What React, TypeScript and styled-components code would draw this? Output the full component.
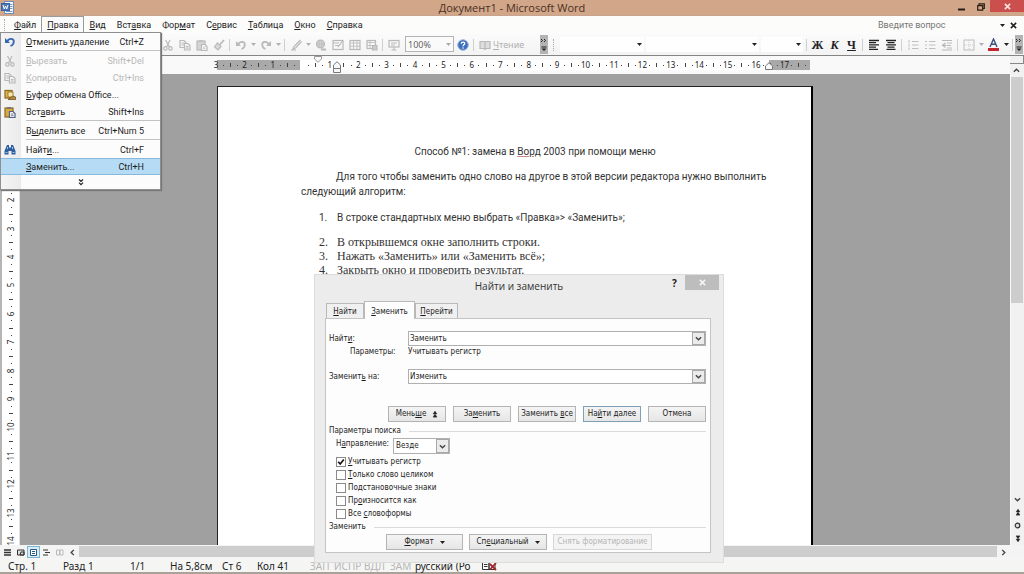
import React from "react";
import styled, { createGlobalStyle, css } from "styled-components";

const UI = '"Noto Sans", "Open Sans", sans-serif';
const MENU = 'Roboto, "Noto Sans", sans-serif';
const DIALOG = '"DejaVu Sans Condensed", "DejaVu Sans", sans-serif';

const GlobalStyle = createGlobalStyle`
  * { box-sizing: border-box; }
  body { margin: 0; font-family: ${UI}; font-size: 9px; color: #222; overflow: hidden; }
  button, input, select { font: inherit; color: inherit; margin: 0; }
  button { padding: 0; border: 0; background: none; }
  svg { display: block; flex: none; }
`;

/* ---------- window frame ---------- */

const Window = styled.div`
  position: relative;
  display: flex;
  flex-direction: column;
  height: 100vh;
  background: #f7f7f7;
`;

const TitleBar = styled.header`
  display: grid;
  grid-template-columns: 1fr auto 1fr;
  height: 16px;
  flex: none;
  background: #d1a689;
  border-bottom: 1px solid #c8a48f;
`;

const AppIcon = styled.div`
  padding: 1px 0 0 1px;
`;

const WindowTitle = styled.h1`
  margin: 0;
  font: 400 11px/15px "Open Sans", ${UI};
  color: #4a3022;
`;

const WindowControls = styled.div`
  display: flex;
  justify-content: flex-end;
`;

const WindowButton = styled.button<{ $close?: boolean }>`
  width: ${(p) => (p.$close ? 34 : 19)}px;
  height: ${(p) => (p.$close ? 12 : 13)}px;
  display: grid;
  place-items: center;
  background: ${(p) => (p.$close ? "#cb4f4c" : "none")};
`;

const MenuBar = styled.nav`
  display: flex;
  align-items: stretch;
  height: 18px;
  flex: none;
  padding-right: 4px;
  background: #fcfcfb;
  font-family: ${MENU};
`;

const Grip = styled.span<{ $width: number }>`
  width: ${(p) => p.$width}px;
  display: grid;
  place-items: center;
  &::after {
    content: "";
    height: 12px;
    border-left: 1px dotted #a8a8a8;
  }
`;

const MenuButton = styled.button<{ $open?: boolean }>`
  padding: 0 4px 0 5px;
  border: 1px solid transparent;
  line-height: 17px;
  white-space: nowrap;
  ${(p) =>
    p.$open &&
    css`
      background: #fafafa;
      border-color: #9a9a9a;
      border-bottom-color: transparent;
    `}
`;

const Ask = styled.input`
  width: 120px;
  margin-left: auto;
  padding: 0;
  border: 0;
  background: none;
  outline: 0;
  &::placeholder { color: #777; opacity: 1; }
`;

const SlimButton = styled.button<{ $width: number }>`
  width: ${(p) => p.$width}px;
  display: grid;
  place-items: center;
`;

/* ---------- toolbars ---------- */

const Toolbars = styled.div`
  display: flex;
  height: 22px;
  flex: none;
  padding: 1px 1px 1px 0;
  border-bottom: 1px solid #858585;
  background: linear-gradient(#fbfbfb, #f3f3f3);
`;

const Toolbar = styled.div<{ $grow?: boolean; $inset?: number }>`
  display: flex;
  align-items: stretch;
  flex: ${(p) => (p.$grow ? "1 1 auto" : "none")};
  padding-left: ${(p) => p.$inset ?? 0}px;
`;

const Tool = styled.button<{ $dim?: boolean }>`
  width: 17px;
  display: grid;
  place-items: center;
  color: ${(p) => (p.$dim ? "#b9b9b9" : "#222")};
`;

const Separator = styled.span`
  width: 5px;
  display: grid;
  place-items: center;
  &::after {
    content: "";
    height: 12px;
    border-left: 1px solid #cfcfcf;
  }
`;

const ReadButton = styled.button`
  width: 47px;
  padding-bottom: 1px;
  text-align: left;
  color: #b0b0b0;
`;

const ZoomBox = styled.label`
  position: relative;
  width: 49px;
  height: 16px;
  margin: 1px 0 0 3px;
  border: 1px solid #b4b4b4;
  background: #fafafa;
`;

const FieldBox = styled.label<{ $weight: number }>`
  position: relative;
  flex: ${(p) => p.$weight} 1 0;
  margin: 2px 1px;
  background: #fefefe;
`;

const BareSelect = styled.select`
  appearance: none;
  display: block;
  width: 100%;
  height: 100%;
  padding: 0 0 0 2px;
  border: 0;
  outline: 0;
  background: none;
  color: #666;
`;

const SelectArrow = styled.span`
  position: absolute;
  right: 2px;
  top: 0;
  bottom: 0;
  display: grid;
  place-items: center;
  pointer-events: none;
`;

const Overflow = styled.button`
  width: 8px;
  display: grid;
  place-items: center;
  background: #b3b3b3;
`;

const Letter = styled.span<{ $italic?: boolean; $underline?: boolean }>`
  font: 700 12px/16px "Liberation Serif", serif;
  font-style: ${(p) => (p.$italic ? "italic" : "normal")};
  text-decoration: ${(p) => (p.$underline ? "underline" : "none")};
`;

/* ---------- rulers ---------- */

const RulerRow = styled.div`
  display: flex;
  height: 18px;
  flex: none;
  background: #f9f9f9;
`;

const RulerArea = styled.div`
  display: flex;
  flex: 1 1 auto;
  justify-content: center;
  padding: 4px 3px 0 20px;
`;

const ScrollTop = styled.div`
  width: 14px;
  flex: none;
  background: #f1f1f1;
`;

const Splitter = styled.div`
  height: 8px;
  border-right: 1px solid #888;
  border-bottom: 1px solid #888;
`;

const RulerTrack = styled.div`
  position: relative;
  display: flex;
  width: 604px;
  height: 10px;
  padding-left: 1px;
  padding-right: 6px;
  background: linear-gradient(
    to right,
    transparent 5px, #a9a9a9 5px, #a9a9a9 88px, #fff 88px,
    #fff 557px, #a9a9a9 557px, #a9a9a9 598px, transparent 598px
  );
`;

const Centimetre = styled.span<{ $vertical?: boolean }>`
  flex: 1 1 0;
  min-width: 0;
  min-height: 0;
  display: flex;
  flex-direction: ${(p) => (p.$vertical ? "column" : "row")};
`;

const Mark = styled.span<{ $vertical?: boolean }>`
  flex: 1 1 0;
  min-width: 0;
  min-height: 0;
  display: flex;
  align-items: center;
  justify-content: center;
  white-space: nowrap;
  font: 8px/8px ${UI};
  color: #222;
  > b {
    font-weight: 400;
    transform: ${(p) => (p.$vertical ? "rotate(-90deg)" : "none")};
  }
  > i {
    width: 1px;
    height: 1px;
    background: #444;
  }
  > u {
    width: ${(p) => (p.$vertical ? 4 : 1)}px;
    height: ${(p) => (p.$vertical ? 1 : 4)}px;
    background: #444;
  }
`;

const IndentMark = styled.svg<{ $left: number; $top: number }>`
  position: absolute;
  left: ${(p) => p.$left}px;
  top: ${(p) => p.$top}px;
`;

const SideRuler = styled.div`
  width: 20px;
  flex: none;
  padding: 9px 1px 0 2px;
  overflow: hidden;
  background: #fff;
  border-left: 2px solid #b5b5b5;
  border-right: 1px solid #e2e2e2;
`;

const SideTrack = styled.div`
  display: flex;
  flex-direction: column;
  height: 483px;
  width: 14px;
`;

/* ---------- document ---------- */

const Workspace = styled.div`
  display: flex;
  flex: 1 1 0;
  min-height: 0;
`;

const Desk = styled.main`
  flex: 1 1 auto;
  display: flex;
  justify-content: center;
  padding-top: 12px;
  background: #a0a0a0;
`;

const Page = styled.article`
  width: 596px;
  padding: 57px 42px 0 83px;
  background: #fff;
  border: 1px solid #222;
  border-right: 2px solid #000;
  border-bottom: 0;
  font: 10px/15px Roboto, "Open Sans", sans-serif;
  color: #333;
`;

const DocTitle = styled.p`
  margin: 0 0 10px;
  text-align: center;
`;

const Misspelt = styled.span`
  text-decoration: underline;
  text-decoration-color: #c98a8a;
`;

const Lead = styled.p`
  margin: 0 0 11px;
  text-indent: 35px;
`;

const Steps = styled.ol`
  margin: 0;
  padding: 0 0 0 18px;
  list-style: none;
`;

const Step = styled.li<{ $serif?: boolean }>`
  display: grid;
  grid-template-columns: 18px 1fr;
  ${(p) =>
    p.$serif
      ? css`font: 12px/14px "Liberation Serif", serif;`
      : css`margin-bottom: 10px;`}
`;

/* ---------- scroll bars and status ---------- */

const VScroll = styled.div`
  width: 14px;
  flex: none;
  display: flex;
  flex-direction: column;
  align-items: center;
  background: #f1f1f1;
  border-left: 1px solid #fafafa;
`;

const VThumb = styled.div`
  align-self: flex-start;
  width: 12px;
  flex: 227 1 0;
  margin-top: 3px;
  background: #cdcdcd;
`;

const VSpace = styled.div`
  flex: 191 1 0;
`;

const ScrollButton = styled.button`
  width: 12px;
  height: 13px;
  display: grid;
  place-items: center;
`;

const HScroll = styled.div`
  display: flex;
  height: 13px;
  flex: none;
  align-items: stretch;
  padding: 1px 14px 0 1px;
  background: #f4f4f4;
`;

const ViewButton = styled.button<{ $on?: boolean }>`
  width: 13px;
  display: grid;
  place-items: center;
  border: 1px solid ${(p) => (p.$on ? "#7db6cf" : "transparent")};
  background: ${(p) => (p.$on ? "#d7ecf7" : "none")};
`;

const HThumb = styled.div`
  flex: 1 1 auto;
  margin-bottom: 1px;
  background: #cdcdcd;
`;

const StatusBar = styled.footer`
  display: flex;
  align-items: center;
  height: 16px;
  flex: none;
  padding: 2px 0 0 8px;
  border-bottom: 2px solid #aaa298;
  background: #f5f6f4;
  font-size: 10px;
  line-height: 12px;
`;

const StatusCell = styled.span<{ $width: number; $off?: boolean }>`
  width: ${(p) => p.$width}px;
  white-space: nowrap;
  color: ${(p) => (p.$off ? "#b5b5b5" : "#222")};
`;

/* ---------- edit menu ---------- */

const Dropdown = styled.div`
  position: absolute;
  left: 0;
  top: 32px;
  width: 161px;
  border: 1px solid #8f8f8f;
  background: linear-gradient(to right, #f4f4f4, #ebebeb 20px, #fcfcfc 20px);
  box-shadow: 1px 1px 1px #777;
  font-family: ${MENU};
`;

const DropItem = styled.button<{ $active?: boolean; $off?: boolean }>`
  display: grid;
  grid-template-columns: 20px 1fr auto;
  align-items: center;
  width: 100%;
  height: 17px;
  padding: 1px 16px 0 0;
  line-height: 14px;
  text-align: left;
  white-space: nowrap;
  color: ${(p) => (p.$off ? "#b8b8b8" : "#1c1c1c")};
  border: 1px solid transparent;
  border-width: 1px 0;
  ${(p) =>
    p.$active &&
    css`
      background: #b6dcf5;
      border-color: #86b9dc;
    `}
`;

const DropIcon = styled.span`
  padding-left: 3px;
`;

const DropLabel = styled.span`
  padding-left: 5px;
`;

const DropRule = styled.div`
  height: 2px;
  margin-left: 25px;
  border-top: 1px solid #c2c2c2;
`;

const DropMore = styled.button`
  display: grid;
  place-items: center;
  width: 100%;
  height: 14px;
`;

/* ---------- find and replace dialog ---------- */

const Dialog = styled.section`
  position: absolute;
  left: calc(50% - 198px);
  top: 274px;
  width: 410px;
  padding: 0 12px 9px 10px;
  border: 1px solid #dcdcdc;
  background: #ececec;
  font: 8px/12px ${DIALOG};
  color: #1c1c1c;
`;

const DialogHead = styled.div`
  display: grid;
  grid-template-columns: 1fr auto 1fr;
  height: 26px;
  margin-right: -8px;
`;

const DialogTitle = styled.h2`
  margin: 0;
  padding: 4px 6px 0 0;
  font: 400 10px/15px "Open Sans", ${UI};
  color: #333;
`;

const DialogControls = styled.div`
  display: flex;
  justify-content: flex-end;
  align-items: flex-start;
`;

const HelpButton = styled.button`
  width: 21px;
  height: 16px;
  font: 700 10px/16px ${UI};
`;

const CloseButton = styled.button`
  width: 34px;
  height: 15px;
  display: grid;
  place-items: center;
  background: #bdbdbd;
`;

const Tabs = styled.div`
  display: flex;
  align-items: flex-end;
  height: 17px;
  padding-left: 1px;
`;

const Tab = styled.button<{ $width: number; $on?: boolean }>`
  width: ${(p) => p.$width}px;
  height: ${(p) => (p.$on ? 18 : 15)}px;
  margin-bottom: ${(p) => (p.$on ? -1 : 0)}px;
  padding-top: 2px;
  position: relative;
  border: 1px solid #b9b9b9;
  border-bottom: 0;
  background: ${(p) => (p.$on ? "#fdfdfd" : "#f0f0f0")};
`;

const Panel = styled.div`
  padding: 12px 4px 2px 3px;
  border: 1px solid #c4c4c4;
  background: #fdfdfd;
`;

const FieldRow = styled.div`
  display: grid;
  grid-template-columns: 79px 1fr;
  align-items: center;
`;

const ParamsRow = styled(FieldRow)`
  height: 12px;
  margin-bottom: 11px;
  > span:first-child { padding-left: 21px; }
`;

const Combo = styled.div`
  position: relative;
  display: flex;
  height: 15px;
  border: 1px solid #b0b0b0;
  background: #fff;
`;

const ComboInput = styled.input`
  flex: 1;
  min-width: 0;
  padding: 0 0 0 1px;
  border: 0;
  outline: 0;
  background: none;
`;

const ComboArrow = styled.button`
  width: 13px;
  display: grid;
  place-items: center;
  border: 1px solid #a8a8a8;
  background: #ebebeb;
`;

const ButtonRow = styled.div<{ $end?: boolean; $gap: number }>`
  display: flex;
  justify-content: ${(p) => (p.$end ? "flex-end" : "flex-start")};
  gap: ${(p) => p.$gap}px;
  margin: ${(p) => (p.$end ? "22px 0 3px" : "1px 0 0 57px")};
`;

const PushButton = styled.button<{ $width: number; $primary?: boolean }>`
  display: flex;
  align-items: center;
  justify-content: center;
  gap: 6px;
  width: ${(p) => p.$width}px;
  height: 16px;
  border: 1px solid ${(p) => (p.$primary ? "#7f9fb5" : "#b4b4b4")};
  background: linear-gradient(#f4f4f4, #e6e6e6);
  white-space: nowrap;
  &:disabled {
    color: #b4b4b4;
    border-color: #d6d6d6;
    background: #f4f4f4;
  }
`;

const SectionTitle = styled.h3`
  display: flex;
  align-items: center;
  gap: 8px;
  height: 12px;
  margin: 0;
  font: inherit;
  &::after {
    content: "";
    flex: 1;
    border-top: 1px solid #dadada;
  }
`;

const DirectionRow = styled.div`
  display: flex;
  height: 16px;
  margin: 1px 0 1px 7px;
  gap: 4px;
`;

const DirectionLabel = styled.label`
  width: 53px;
`;

const DirectionBox = styled(Combo)`
  width: 57px;
  height: 16px;
`;

const DirectionSelect = styled(BareSelect)`
  color: #1c1c1c;
`;

const SelectCap = styled.span`
  position: absolute;
  right: 0;
  top: 0;
  bottom: 0;
  width: 13px;
  display: grid;
  place-items: center;
  border: 1px solid #a8a8a8;
  background: #ebebeb;
  pointer-events: none;
`;

const CheckRow = styled.label`
  display: flex;
  align-items: center;
  gap: 2px;
  height: 13px;
  margin-left: 7px;
`;

const CheckList = styled.div`
  margin-bottom: 1px;
`;

const CheckBox = styled.span`
  position: relative;
  width: 10px;
  height: 10px;
  > svg {
    position: absolute;
    left: 0;
    top: 0;
    display: none;
    pointer-events: none;
  }
  > input:checked + svg { display: block; }
`;

const CheckInput = styled.input`
  appearance: none;
  display: block;
  width: 10px;
  height: 10px;
  border: 1px solid #8a8a8a;
  background: #fff;
`;

/* ---------- small drawings ---------- */

const Caret = ({ color = "#222" }: { color?: string }) => (
  <svg width="5" height="3" viewBox="0 0 5 3"><path d="M0 0h5L2.5 3z" fill={color} /></svg>
);

const Chevron = ({ turn = 0, size = 7 }: { turn?: number; size?: number }) => (
  <svg width={size} height={size} viewBox="0 0 8 8">
    <path d="M1 2.5 4 5.5 7 2.5" fill="none" stroke="#444" strokeWidth="1.6" transform={`rotate(${turn} 4 4)`} />
  </svg>
);

const Cross = ({ color, size = 7 }: { color: string; size?: number }) => (
  <svg width={size} height={size} viewBox="0 0 8 8">
    <path d="M1 1 7 7M7 1 1 7" stroke={color} strokeWidth="1.8" />
  </svg>
);

const Glyph = ({ children, size = 12 }: { children: React.ReactNode; size?: number }) => (
  <svg width={size} height={size} viewBox="0 0 12 12" fill="none" stroke="currentColor" strokeWidth="1.2">{children}</svg>
);

const Scissors = () => (
  <Glyph><path d="M3.5 1 7.5 8M8 1 4.5 8" /><circle cx="3.4" cy="9.4" r="1.7" /><circle cx="8.4" cy="9.4" r="1.7" /></Glyph>
);
const Copy = () => (
  <Glyph><path d="M1 1.5h4l2 2v5H1zM2.5 4h3M2.5 6h3" /><path d="M5.5 4.5h3.5l2 2v4.5H5.5z" fill="#f4f4f4" /><path d="M7 7.5h2.5M7 9.2h2.5" /></Glyph>
);
const Paste = ({ tint }: { tint?: boolean }) => (
  <Glyph>
    <rect x="1" y="2" width="8" height="9" fill={tint ? "#d9aa3c" : "#d4d4d4"} stroke={tint ? "#8c6a24" : "currentColor"} />
    <rect x="3" y="1" width="4" height="2" fill={tint ? "#777" : "#c0c0c0"} stroke="none" />
    <path d="M5.5 5.5h3.5l2 2v4H5.5z" fill="#fafafa" stroke={tint ? "#4d5f86" : "currentColor"} />
    <path d="M7 8h2.5M7 9.7h2.5" strokeWidth=".8" stroke={tint ? "#4d5f86" : "currentColor"} />
  </Glyph>
);
const Clipboard = () => (
  <Glyph>
    <rect x="1" y="1.5" width="7" height="7.5" fill="#e2b545" stroke="#8c6a24" />
    <rect x="4" y="3" width="5" height="5" fill="#f7e6ac" stroke="#8c6a24" strokeWidth=".8" />
    <path d="M4 10.5h7.5V8L9 7z" fill="#b98a35" stroke="#6d5220" strokeWidth=".8" />
  </Glyph>
);
const Brush = () => (
  <Glyph><path d="M11 1 7 5.5" strokeWidth="1.8" /><path d="M4.5 4 8 7.5 5 11 1.5 8z" fill="#d9d9d9" /></Glyph>
);
const Undo = ({ color }: { color?: string }) => (
  <svg width="12" height="12" viewBox="0 0 12 12" fill="none" stroke={color ?? "currentColor"} strokeWidth="1.8">
    <path d="M3 5.5C5 1.8 9.8 2 9.8 5.5 9.8 8 8 9.5 6.5 10" /><path d="M1 2v5h5z" fill={color ?? "currentColor"} stroke="none" />
  </svg>
);
const Redo = () => (
  <Glyph><path d="M9 5.5C7 1.8 2.2 2 2.2 5.5 2.2 8 4 9.5 5.5 10" strokeWidth="1.8" /><path d="M11 2v5H6z" fill="currentColor" stroke="none" /></Glyph>
);
const Pen = () => (
  <Glyph><path d="M10.5 1 4 7.5 3 10l2.5-1 6-6.5M1 11h5" /></Glyph>
);
const GlobeLink = () => (
  <Glyph><circle cx="5.5" cy="5" r="4" fill="#d2d2d2" /><path d="M1.5 5h8M5.5 1c-2 2.5-2 5.5 0 8M5.5 1c2 2.5 2 5.5 0 8" strokeWidth=".7" /><path d="M6 10.5h5" strokeWidth="2" /></Glyph>
);
const Borders = () => (
  <Glyph><rect x="1" y="1.5" width="10" height="9" /><path d="M1 4h6M3 6.5h4M10.5 2 6 8" /></Glyph>
);
const Grid = () => (
  <Glyph><rect x="1" y="1.5" width="10" height="9" /><path d="M1 4h10M1 7.2h10M4.5 2v8.5M8 2v8.5" strokeWidth=".8" /></Glyph>
);
const Sheet = () => (
  <Glyph><rect x="1" y="1.5" width="8.5" height="8" /><path d="M1 3.5h8.5M1 6.5h8M4 2v7" strokeWidth=".8" /><path d="M6.5 6.5h4.5v4.5H6.5z" fill="#ccc" /></Glyph>
);
const Monitor = () => (
  <Glyph><rect x="1" y="1.5" width="10" height="6.5" /><path d="M3 4h6M3 6h4M6 8v3M3.5 11h5" /></Glyph>
);
const Help = () => (
  <svg width="12" height="12" viewBox="0 0 12 12">
    <circle cx="6" cy="6" r="5.3" fill="#3f70bd" stroke="#9db7dd" />
    <path d="M4.2 4.7C4.3 2.5 7.9 2.7 7.7 4.7 7.6 5.8 6 5.9 6 7.3" fill="none" stroke="#fff" strokeWidth="1.3" />
    <circle cx="6" cy="9" r=".8" fill="#fff" />
  </svg>
);
const Book = () => (
  <Glyph><path d="M1 2.5h4l1 1 1-1h4v7H7l-1 1-1-1H1zM6 3.5v7" fill="#dedede" /></Glyph>
);
const Binoculars = () => (
  <svg width="12" height="12" viewBox="0 0 12 12">
    <path d="M3 1h2v2l1 1 1-1V1h2l2.5 6v3.5h-4V7h-3v3.5h-4V7z" fill="#2f5f9f" />
    <path d="M1.5 8.5h2M8.5 8.5h2M3.5 3v2M8.5 3v2" stroke="#9cc0e6" />
  </svg>
);
const AlignLeft = () => (
  <Glyph><path d="M1 1.5h10M1 3.7h7M1 5.9h10M1 8.1h7M1 10.3h9" strokeWidth="1.3" /></Glyph>
);
const AlignCenter = () => (
  <Glyph><path d="M1 1.5h10M2.5 3.7h7M1 5.9h10M2.5 8.1h7M1.5 10.3h9" strokeWidth="1.3" /></Glyph>
);
const NumberList = () => (
  <Glyph><path d="M5 2.5h6.5M5 6h6.5M5 9.5h6.5M2 1v3M2 5v2.5M2 8.5V11" strokeWidth=".9" /></Glyph>
);
const BulletList = () => (
  <Glyph><path d="M5 2.5h6.5M5 6h6.5M5 9.5h6.5M1 2.5h2M1 6h2M1 9.5h2" strokeWidth=".9" /></Glyph>
);
const Indent = () => (
  <Glyph><path d="M1 1.5h10M6 4h5M6 6.5h4M1 11h10M6 9h5M4.5 4 1.5 6.3 4.5 8.5M1.5 6.3h4" /></Glyph>
);
const Frame = () => (
  <Glyph><rect x="1" y="1" width="10" height="10" strokeWidth=".9" /><path d="M6 1v10M1 6h10" strokeDasharray="1 1" strokeWidth=".7" /></Glyph>
);
const FontColor = () => (
  <svg width="13" height="13" viewBox="0 0 13 13">
    <path d="M3 9 6.5 1 10 9M4.3 6.3h4.4" fill="none" stroke="#3c4f7d" strokeWidth="1.4" />
    <rect x="1" y="10" width="11" height="3" fill="#c4242b" />
  </svg>
);
const WordLogo = () => (
  <svg width="13" height="13" viewBox="0 0 13 13">
    <rect x="3.5" y=".5" width="9" height="12" fill="#f4f8fd" stroke="#6f8fbb" />
    <path d="M8 3.5h3.5M8 5.5h3.5M8 7.5h3.5M5 10.5h6.5" stroke="#7e9ac1" />
    <rect x=".5" y="2.5" width="8" height="7" fill="#4d79b8" stroke="#3a62a0" />
    <path d="M2 4 3.3 8 4.5 5 5.7 8 7 4" fill="none" stroke="#fff" strokeWidth="1" />
  </svg>
);
const OverflowMarks = () => (
  <svg width="6" height="14" viewBox="0 0 6 14"><path d="M0 1l1.5 1.5L0 4M3 1l1.5 1.5L3 4" fill="none" stroke="#222" /><path d="M.5 9h5" stroke="#222" /><path d="M.5 10.5h5L3 13z" fill="#222" /></svg>
);
const DoubleChevron = () => (
  <svg width="6" height="7" viewBox="0 0 6 7"><path d="M1 .5l2 2 2-2M1 3.7l2 2 2-2" fill="none" stroke="#222" strokeWidth="1.2" /></svg>
);
const DoubleUp = ({ turn = 0 }: { turn?: number }) => (
  <svg width="6" height="7" viewBox="0 0 6 7"><path d="M3 0 5 3H1zM3 3 5 6H1zM1 6.5h4" fill="#222" stroke="#222" strokeWidth=".3" transform={`rotate(${turn} 3 3.5)`} /></svg>
);
const Spelling = () => (
  <svg width="15" height="10" viewBox="0 0 15 10">
    <path d="M.5 1.5h6.5v7H.5zM7 1.5h6v7H7zM2 3.5h3.5M2 5.5h3.5" fill="#fff" stroke="#333" />
    <path d="M8 3 14 9M14 2 8 8.5" stroke="#a3262a" strokeWidth="1.8" />
  </svg>
);

/* A label with "&" before its access key. */
const Keyed = ({ text }: { text: string }) => {
  const at = text.indexOf("&");
  if (at < 0) return <>{text}</>;
  return <span>{text.slice(0, at)}<u>{text[at + 1]}</u>{text.slice(at + 2)}</span>;
};

const Scale = ({ from, to, vertical }: { from: number; to: number; vertical?: boolean }) => (
  <>
    {Array.from({ length: to - from + 1 }, (_, i) => from + i).map((n) => (
      <Centimetre key={n} $vertical={vertical}>
        <Mark $vertical={vertical}>{n !== 0 && <b>{Math.abs(n)}</b>}</Mark>
        <Mark $vertical={vertical}><i /></Mark>
        <Mark $vertical={vertical}><u /></Mark>
        <Mark $vertical={vertical}><i /></Mark>
      </Centimetre>
    ))}
  </>
);

type Entry = { label: string; keys?: string; icon?: React.ReactNode; off?: boolean; active?: boolean; rule?: boolean };

const editMenu: Entry[] = [
  { label: "&Отменить удаление", keys: "Ctrl+Z", icon: <Undo color="#3767ad" />, rule: true },
  { label: "&Вырезать", keys: "Shift+Del", icon: <Scissors />, off: true },
  { label: "&Копировать", keys: "Ctrl+Ins", icon: <Copy />, off: true },
  { label: "&Буфер обмена Office...", icon: <Clipboard /> },
  { label: "Вст&авить", keys: "Shift+Ins", icon: <Paste tint />, rule: true },
  { label: "В&ыделить все", keys: "Ctrl+Num 5", rule: true },
  { label: "Найт&и...", keys: "Ctrl+F", icon: <Binoculars /> },
  { label: "&Заменить...", keys: "Ctrl+H", active: true },
];

const menus = ["&Файл", "&Правка", "&Вид", "Вст&авка", "Фор&мат", "С&ервис", "&Таблица", "&Окно", "&Справка"];

const options = ["&Учитывать регистр", "&Только слово целиком", "По&дстановочные знаки", "Пр&оизносится как", "Все &словоформы"];

const status: [string, number, boolean?][] = [
  ["Стр. 1", 55], ["Разд 1", 67], ["1/1", 40], ["На 5,8см", 52], ["Ст 6", 35], ["Кол 41", 53],
  ["ЗАП", 24, true], ["ИСПР", 30, true], ["ВДЛ", 26, true], ["ЗАМ", 25, true], ["русский (Ро", 67],
];

const CaretButton = ({ dim, label }: { dim?: boolean; label: string }) => (
  <SlimButton $width={8} aria-label={label}><Caret color={dim ? "#b0b0b0" : "#222"} /></SlimButton>
);

export default function App() {
  return (
    <Window>
      <GlobalStyle />
      <TitleBar>
        <AppIcon><WordLogo /></AppIcon>
        <WindowTitle>Документ1 - Microsoft Word</WindowTitle>
        <WindowControls>
          <WindowButton aria-label="Свернуть"><svg width="7" height="8"><path d="M0 6.5h7" stroke="#2b1c14" strokeWidth="2" /></svg></WindowButton>
          <WindowButton aria-label="Развернуть"><svg width="8" height="8"><path d="M2 2V.8h5.3v4.7H6M.7 2.7h5v4.5h-5z" fill="none" stroke="#2b1c14" strokeWidth="1.2" /></svg></WindowButton>
          <WindowButton $close aria-label="Закрыть"><Cross color="#f6e4e2" /></WindowButton>
        </WindowControls>
      </TitleBar>

      <MenuBar>
        <Grip $width={8} />
        {menus.map((m, i) => <MenuButton key={m} $open={i === 1}><Keyed text={m} /></MenuButton>)}
        <Ask placeholder="Введите вопрос" aria-label="Введите вопрос" />
        <CaretButton label="Список вопросов" />
        <SlimButton $width={14} aria-label="Закрыть документ"><Cross color="#222" /></SlimButton>
      </MenuBar>

      <Toolbars>
        <Toolbar $inset={159}>
          <Tool $dim aria-label="Вырезать"><Scissors /></Tool>
          <Tool $dim aria-label="Копировать"><Copy /></Tool>
          <Tool $dim aria-label="Вставить"><Paste /></Tool>
          <Tool $dim aria-label="Формат по образцу"><Brush /></Tool>
          <Separator />
          <Tool $dim aria-label="Отменить"><Undo /></Tool>
          <CaretButton dim label="Список отмен" />
          <Tool $dim aria-label="Вернуть"><Redo /></Tool>
          <CaretButton dim label="Список возвратов" />
          <Separator />
          <Tool $dim aria-label="Рукописные примечания"><Pen /></Tool>
          <CaretButton dim label="Вид пера" />
          <Tool $dim aria-label="Гиперссылка"><GlobeLink /></Tool>
          <Tool $dim aria-label="Таблицы и границы"><Borders /></Tool>
          <Tool $dim aria-label="Добавить таблицу"><Grid /></Tool>
          <Tool $dim aria-label="Лист Excel"><Sheet /></Tool>
          <Separator />
          <Tool $dim aria-label="Схема документа"><Monitor /></Tool>
          <ZoomBox>
            <BareSelect aria-label="Масштаб"><option>100%</option></BareSelect>
            <SelectArrow><Caret color="#aaa" /></SelectArrow>
          </ZoomBox>
          <Tool aria-label="Справка"><Help /></Tool>
          <Separator />
          <Tool $dim aria-label="Режим чтения"><Book /></Tool>
          <ReadButton><Keyed text="&Чтение" /></ReadButton>
          <Overflow aria-label="Параметры панели"><OverflowMarks /></Overflow>
        </Toolbar>
        <Toolbar $grow>
          <Grip $width={11} />
          <FieldBox $weight={86}><BareSelect aria-label="Стиль" /><SelectArrow><Caret /></SelectArrow></FieldBox>
          <FieldBox $weight={115}><BareSelect aria-label="Шрифт" /><SelectArrow><Caret /></SelectArrow></FieldBox>
          <FieldBox $weight={43}><BareSelect aria-label="Размер шрифта" /><SelectArrow><Caret /></SelectArrow></FieldBox>
          <Separator />
          <Tool aria-label="Полужирный"><Letter>Ж</Letter></Tool>
          <Tool aria-label="Курсив"><Letter $italic>К</Letter></Tool>
          <Tool aria-label="Подчеркнутый"><Letter $underline>Ч</Letter></Tool>
          <Separator />
          <Tool aria-label="По левому краю"><AlignLeft /></Tool>
          <Tool aria-label="По центру"><AlignCenter /></Tool>
          <Separator />
          <Tool $dim aria-label="Нумерация"><NumberList /></Tool>
          <Tool $dim aria-label="Маркеры"><BulletList /></Tool>
          <Tool $dim aria-label="Увеличить отступ"><Indent /></Tool>
          <Separator />
          <Tool $dim aria-label="Внешние границы"><Frame /></Tool>
          <CaretButton dim label="Вид границ" />
          <Tool aria-label="Цвет шрифта"><FontColor /></Tool>
          <CaretButton label="Выбор цвета" />
          <Separator />
          <Overflow aria-label="Параметры панели"><OverflowMarks /></Overflow>
        </Toolbar>
      </Toolbars>

      <RulerRow>
        <RulerArea>
          <RulerTrack>
            <Scale from={-3} to={17} />
            <IndentMark $left={102} $top={-4} width="8" height="7" viewBox="0 0 8 7"><path d="M.5.5h7V3L4 6.3.5 3z" fill="#f8f8f8" stroke="#999" /></IndentMark>
            <IndentMark $left={121} $top={1} width="8" height="12" viewBox="0 0 8 12"><path d="M4 .7 7.5 4v3.5H.5V4zM.5 7.5h7v4H.5z" fill="#f8f8f8" stroke="#777" /></IndentMark>
            <IndentMark $left={553} $top={2} width="8" height="8" viewBox="0 0 8 8"><path d="M4 .7 7.5 4v3.5H.5V4z" fill="#f8f8f8" stroke="#777" /></IndentMark>
          </RulerTrack>
        </RulerArea>
        <ScrollTop>
          <Splitter />
          <ScrollButton aria-label="Вверх"><Chevron turn={180} /></ScrollButton>
        </ScrollTop>
      </RulerRow>

      <Workspace>
        <SideRuler><SideTrack><Scale from={-2} to={14} vertical /></SideTrack></SideRuler>
        <Desk>
          <Page>
            <DocTitle>Способ №1: замена в <Misspelt>Ворд</Misspelt> 2003 при помощи меню</DocTitle>
            <Lead>Для того чтобы заменить одно слово на другое в этой версии редактора нужно выполнить следующий алгоритм:</Lead>
            <Steps>
              <Step><span>1.</span><span>В строке стандартных меню выбрать «Правка»&gt; «Заменить»;</span></Step>
              <Step $serif><span>2.</span><span>В открывшемся окне заполнить строки.</span></Step>
              <Step $serif><span>3.</span><span>Нажать «Заменить» или «Заменить всё»;</span></Step>
              <Step $serif><span>4.</span><span>Закрыть окно и проверить результат.</span></Step>
            </Steps>
          </Page>
        </Desk>
        <VScroll>
          <VThumb />
          <VSpace />
          <ScrollButton aria-label="Вниз"><Chevron /></ScrollButton>
          <ScrollButton aria-label="Предыдущая страница"><DoubleUp /></ScrollButton>
          <ScrollButton aria-label="Объект перехода"><svg width="7" height="7"><circle cx="3.5" cy="3.5" r="2.3" fill="#ddd" stroke="#333" strokeWidth="1.2" /></svg></ScrollButton>
          <ScrollButton aria-label="Следующая страница"><DoubleUp turn={180} /></ScrollButton>
        </VScroll>
      </Workspace>

      <HScroll>
        <ViewButton aria-label="Обычный режим"><svg width="7" height="7"><path d="M0 1h7M0 3.5h7M0 6h7" stroke="#333" strokeWidth="1.4" /></svg></ViewButton>
        <ViewButton aria-label="Веб-документ"><svg width="8" height="7"><path d="M.5 1h6.5v5H.5zM4 3h3v3H3z" fill="#ddd" stroke="#333" /></svg></ViewButton>
        <ViewButton $on aria-label="Разметка страницы"><svg width="7" height="7"><path d="M.5.5h6v6h-6zM2 2.5h3M2 4.5h3" fill="#fff" stroke="#2b5b7c" /></svg></ViewButton>
        <ViewButton aria-label="Структура"><svg width="7" height="7"><path d="M0 1h5M2 3.5h5M0 6h5" stroke="#333" strokeWidth="1.2" /></svg></ViewButton>
        <ViewButton aria-label="Чтение"><svg width="8" height="7"><path d="M.5 1h3v5h-3zM4 1h3v5H4z" fill="none" stroke="#bbb" /></svg></ViewButton>
        <ViewButton aria-label="Влево"><Chevron turn={90} /></ViewButton>
        <HThumb />
        <ViewButton aria-label="Вправо"><Chevron turn={-90} /></ViewButton>
      </HScroll>

      <StatusBar>
        {status.map(([text, width, off]) => <StatusCell key={text} $width={width} $off={off}>{text}</StatusCell>)}
        <Spelling />
      </StatusBar>

      <Dropdown role="menu">
        {editMenu.map((e) => (
          <React.Fragment key={e.label}>
            <DropItem role="menuitem" $off={e.off} $active={e.active}>
              <DropIcon>{e.icon}</DropIcon>
              <DropLabel><Keyed text={e.label} /></DropLabel>
              <span>{e.keys}</span>
            </DropItem>
            {e.rule && <DropRule />}
          </React.Fragment>
        ))}
        <DropMore aria-label="Развернуть меню"><DoubleChevron /></DropMore>
      </Dropdown>

      <Dialog role="dialog" aria-labelledby="replace-title">
        <DialogHead>
          <span />
          <DialogTitle id="replace-title">Найти и заменить</DialogTitle>
          <DialogControls>
            <HelpButton>?</HelpButton>
            <CloseButton aria-label="Закрыть окно"><Cross color="#f4f4f4" /></CloseButton>
          </DialogControls>
        </DialogHead>
        <Tabs role="tablist">
          <Tab role="tab" $width={38}><Keyed text="&Найти" /></Tab>
          <Tab role="tab" $width={51} $on aria-selected><Keyed text="&Заменить" /></Tab>
          <Tab role="tab" $width={43}><Keyed text="&Перейти" /></Tab>
        </Tabs>
        <Panel>
          <FieldRow>
            <label htmlFor="find"><Keyed text="Найт&и:" /></label>
            <Combo><ComboInput id="find" defaultValue="Заменить" /><ComboArrow aria-label="Список поиска"><Chevron /></ComboArrow></Combo>
          </FieldRow>
          <ParamsRow><span>Параметры:</span><span>Учитывать регистр</span></ParamsRow>
          <FieldRow>
            <label htmlFor="replace"><Keyed text="Заменит&ь на:" /></label>
            <Combo><ComboInput id="replace" defaultValue="Изменить" /><ComboArrow aria-label="Список замен"><Chevron /></ComboArrow></Combo>
          </FieldRow>
          <ButtonRow $end $gap={7}>
            <PushButton $width={58}><Keyed text="Мень&ше" /><DoubleUp /></PushButton>
            <PushButton $width={58}><Keyed text="За&менить" /></PushButton>
            <PushButton $width={58}><Keyed text="Заменить &все" /></PushButton>
            <PushButton $width={58} $primary><Keyed text="На&йти далее" /></PushButton>
            <PushButton $width={58}>Отмена</PushButton>
          </ButtonRow>
          <SectionTitle>Параметры поиска</SectionTitle>
          <DirectionRow>
            <DirectionLabel htmlFor="direction"><Keyed text="Н&аправление:" /></DirectionLabel>
            <DirectionBox>
              <DirectionSelect id="direction"><option>Везде</option></DirectionSelect>
              <SelectCap><Chevron /></SelectCap>
            </DirectionBox>
          </DirectionRow>
          <CheckList>
            {options.map((o, i) => (
              <CheckRow key={o}>
                <CheckBox>
                  <CheckInput type="checkbox" defaultChecked={i === 0} />
                  <svg width="10" height="10"><path d="M2.2 4.8 4.2 7 7.8 2.5" fill="none" stroke="#111" strokeWidth="1.6" /></svg>
                </CheckBox>
                <Keyed text={o} />
              </CheckRow>
            ))}
          </CheckList>
          <SectionTitle>Заменить</SectionTitle>
          <ButtonRow $gap={6}>
            <PushButton $width={77}><Keyed text="&Формат" /><Caret /></PushButton>
            <PushButton $width={78}><Keyed text="Сп&ециальный" /><Caret /></PushButton>
            <PushButton $width={99} disabled>Снять форматирование</PushButton>
          </ButtonRow>
        </Panel>
      </Dialog>
    </Window>
  );
}
